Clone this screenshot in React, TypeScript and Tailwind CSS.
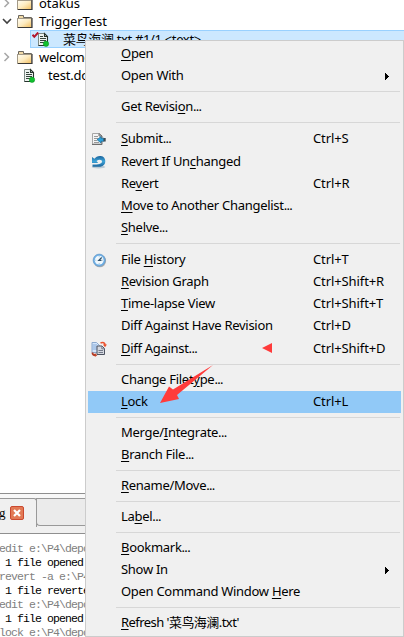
import React from "react";

type Entry = {
  label: string;
  // index of the underlined accelerator letter
  key?: number;
  shortcut?: string;
  icon?: React.ReactNode;
  submenu?: boolean;
  tall?: boolean;
  active?: boolean;
  tight?: boolean;
};

function FolderIcon() {
  return (
    <svg className="h-[15px] w-4 shrink-0" viewBox="0 0 16 15">
      <defs>
        <linearGradient id="folder" x1="0" y1="0" x2="1" y2="1">
          <stop offset="0" stopColor="#fffdf4" />
          <stop offset="0.5" stopColor="#fdebc0" />
          <stop offset="1" stopColor="#f2bd5c" />
        </linearGradient>
      </defs>
      <path d="M1.5 4V1.5H6.5V3.5H14.5V13.5H1.5Z" fill="#f0d9a6" stroke="#6b675f" />
      <rect x="0.5" y="4.5" width="14" height="9" fill="url(#folder)" stroke="#a39a88" />
      <path d="M1 13.5H15V4" fill="none" stroke="#3a3836" strokeWidth="1.2" />
    </svg>
  );
}

function FileIcon({ checked }: { checked?: boolean }) {
  return (
    <svg className="h-[15px] w-[18px] shrink-0" viewBox="0 0 18 15">
      <path d="M6.5 1.5H12.5L15.5 4.5V13.5H6.5Z" fill="#eef3f1" stroke="#7c8984" />
      <path d="M6.5 13.5H15.5V4.5L12.5 1.5V4.5H15.5" fill="none" stroke="#26332c" strokeWidth="1.1" />
      <path d="M8 4.5H11M8 6.5H14M8 8.5H14M8 10.5H12" stroke="#35443c" />
      <circle cx="14" cy="11.8" r="2.7" fill="#10c02e" stroke="#078a1d" strokeWidth="0.5" />
      {checked && <path d="M0.5 2.7L2.3 4.8L6.2 0.5" fill="none" stroke="#b3152b" strokeWidth="2" />}
    </svg>
  );
}

function Chevron({ open }: { open?: boolean }) {
  return (
    <svg className="h-[10px] w-[10px] shrink-0" viewBox="0 0 10 10" fill="none">
      {open ? (
        <path d="M1 3L5 7L9 3" stroke="#404040" strokeWidth="1.6" />
      ) : (
        <path d="M2.5 1L6.5 5L2.5 9" stroke="#a6a6a6" strokeWidth="1.5" />
      )}
    </svg>
  );
}

const submitIcon = (
  <svg className="h-4 w-4" viewBox="0 0 16 16">
    <path d="M1.5 2.5H8L10.5 5V13H1.5Z" fill="#f4f4f4" stroke="#a6a6a6" />
    <path d="M1 13.5H11V5L8 2.5V5H10.5" fill="none" stroke="#6e6e6e" />
    <path d="M3 5.5H7M3 7.5H7M3 9.5H6M3 11.5H8" stroke="#999" />
    <path d="M6 8.7L10 5.5V7.2H13V10.3H10V12Z" fill="#2ba1dc" stroke="#17638f" strokeWidth="0.6" />
    <rect x="12.5" y="7" width="2.2" height="3.5" fill="#3c4c56" />
  </svg>
);

const revertIcon = (
  <svg className="h-4 w-4" viewBox="0 0 16 16">
    <defs>
      <linearGradient id="undo" x1="0" y1="0" x2="0" y2="1">
        <stop offset="0" stopColor="#1a639c" />
        <stop offset="0.5" stopColor="#3da4d8" />
        <stop offset="1" stopColor="#1c659c" />
      </linearGradient>
    </defs>
    <ellipse cx="7.5" cy="13" rx="6.8" ry="1.4" fill="#b9cad5" />
    <path d="M1 3V9H7.2L5.5 7C8 5 11 5.5 11 7.7C10.8 9.8 7.5 10.5 1.5 10.5V12.7H9.5C16 12 15.8 2.5 9.8 2C7 1.7 4.8 2.9 3.4 4.7Z" fill="url(#undo)" />
  </svg>
);

const historyIcon = (
  <svg className="h-4 w-4" viewBox="0 0 16 16">
    <circle cx="8.8" cy="9" r="6.3" fill="#b0b0b0" />
    <circle cx="8.2" cy="8.2" r="6.1" fill="#6fb0e6" stroke="#5f94c4" strokeWidth="0.6" />
    <circle cx="8.2" cy="8.2" r="4.4" fill="#f0f8fd" />
    <path d="M8.2 4.3V5.2M4.3 8.2H5.2M11.2 8.2H12.1M8.2 11.2V12.1" stroke="#9dbdd3" />
    <path d="M10.7 5.5L7.8 8.4H10.5" fill="none" stroke="#31516a" strokeWidth="1.2" />
  </svg>
);

const diffIcon = (
  <svg className="h-4 w-4" viewBox="0 0 16 16">
    <path d="M1 1.5H5.5L8.5 4.5V11.5H1Z" fill="#d3e5fb" stroke="#8ba9ce" />
    <path d="M1.5 4H6M1.5 6H6M1.5 8H6" stroke="#86abd9" />
    <path d="M6 5H11L13.5 7.5V13.5H6Z" fill="#d5d8e0" stroke="#4d5361" />
    <path d="M10.8 5V7.8H13.5M7.5 9.5H12M7.5 11.5H12" fill="none" stroke="#737a89" />
    <path d="M9.5 2C12 0.8 14 2 14 4" fill="none" stroke="#ea5330" strokeWidth="1.7" />
    <path d="M11.8 3.5H16L14 6.3Z" fill="#ea5330" />
    <path d="M1.5 11.5C1.3 13.3 2.3 14.2 4.5 14.2" fill="none" stroke="#b23b25" strokeWidth="1.8" />
    <path d="M3.8 12V16L6.3 14.2Z" fill="#c54529" />
  </svg>
);

const groups: Entry[][] = [
  [{ label: "Open", key: 0 }, { label: "Open With", submenu: true }],
  [{ label: "Get Revision...", key: 10 }],
  [
    { label: "Submit...", key: 0, shortcut: "Ctrl+S", icon: submitIcon, tall: true },
    { label: "Revert If Unchanged", key: 12, icon: revertIcon, tall: true },
    { label: "Revert", key: 2, shortcut: "Ctrl+R" },
    { label: "Move to Another Changelist...", key: 0 },
    { label: "Shelve...", key: 0 },
  ],
  [
    { label: "File History", key: 5, shortcut: "Ctrl+T", icon: historyIcon, tall: true },
    { label: "Revision Graph", key: 0, shortcut: "Ctrl+Shift+R" },
    { label: "Time-lapse View", key: 0, shortcut: "Ctrl+Shift+T" },
    { label: "Diff Against Have Revision", shortcut: "Ctrl+D" },
    { label: "Diff Against...", key: 0, shortcut: "Ctrl+Shift+D", icon: diffIcon, tall: true },
  ],
  [{ label: "Change Filetype...", key: 12 }, { label: "Lock", key: 0, shortcut: "Ctrl+L", active: true }],
  [{ label: "Merge/Integrate...", key: 6 }, { label: "Branch File...", key: 0 }],
  [{ label: "Rename/Move...", key: 0 }],
  [{ label: "Label...", key: 2 }],
  [
    { label: "Bookmark...", key: 0 },
    { label: "Show In", submenu: true },
    { label: "Open Command Window Here", key: 20 },
  ],
  [{ label: "Refresh '菜鸟海澜.txt'", key: 0, tight: true }],
];

function Row({ item }: { item: Entry }) {
  const { label, key: k } = item;
  const dots = label.endsWith("...");
  const body = dots ? label.slice(0, -3) : label;
  return (
    <div className={`mx-[2px] flex items-center ${item.tall ? "h-[23px]" : "h-[22px]"} ${item.active ? "bg-[#91c9f7]" : ""}`}>
      <span className="flex w-[33px] shrink-0 pl-[3px]">{item.icon}</span>
      <span className={`w-48 shrink-0 pb-px whitespace-pre ${item.tight ? "tracking-[-0.55px]" : "tracking-[-0.29px]"}`}>
        {k === undefined ? body : (
          <>
            {body.slice(0, k)}
            <span className="underline decoration-1 underline-offset-2">{body[k]}</span>
            {body.slice(k + 1)}
          </>
        )}
        {dots && <span className="tracking-[-0.7px]">...</span>}
      </span>
      <span className="pb-px tracking-[-0.1px] whitespace-pre">{item.shortcut}</span>
      {item.submenu && (
        <svg className="mr-3 ml-auto h-[7px] w-1" viewBox="0 0 4 7" shapeRendering="crispEdges">
          <path d="M0 0L4 3.5L0 7Z" />
        </svg>
      )}
    </div>
  );
}

const log = [
  { text: "edit e:\\P4\\depot", cmd: true },
  { text: " 1 file opened", cmd: false },
  { text: "revert -a e:\\P4", cmd: true },
  { text: " 1 file reverted", cmd: false },
  { text: "edit e:\\P4\\depot", cmd: true },
  { text: " 1 file opened", cmd: false },
  { text: "lock e:\\P4\\depot", cmd: true },
];

export default function App() {
  return (
    <div className="relative h-[637px] w-[404px] overflow-hidden bg-white font-['Noto_Sans','Noto_Sans_CJK_SC',sans-serif] text-[13px] leading-none text-black">
      <div className="flex h-[494px] flex-col overflow-hidden border-b border-[#8f8f8f]">
        <div className="-mt-[6px] flex h-[18px] shrink-0 items-center pl-[2px]">
          <Chevron />
          <span className="ml-[5px]"><FolderIcon /></span>
          <span className="ml-[6px]">otakus</span>
        </div>
        <div className="flex h-[18px] shrink-0 items-center pl-[2px]">
          <Chevron open />
          <span className="ml-[5px]"><FolderIcon /></span>
          <span className="ml-[6px] tracking-[-0.5px]"><span className="tracking-[-0.45px]">T</span><span className="tracking-[-0.1px]">riggerTest</span></span>
        </div>
        <div className="ml-[30px] flex h-[18px] shrink-0 items-center border border-r-0 border-[#99d1ff] bg-[#cce8ff] pl-[1px]">
          <FileIcon checked />
          <span className="ml-[13px] tracking-[-0.35px] whitespace-pre">菜鸟海澜.txt #1/1 &lt;text&gt;</span>
        </div>
        <div className="flex h-[18px] shrink-0 items-center pl-[2px]">
          <Chevron />
          <span className="ml-[5px]"><FolderIcon /></span>
          <span className="ml-[6px] tracking-[-0.3px]">welcome</span>
        </div>
        <div className="flex h-[18px] shrink-0 items-center pl-[18px]">
          <FileIcon />
          <span className="ml-3 tracking-[-0.2px]">test.docx</span>
        </div>
      </div>
      <div className="h-1 bg-[#f8f8f8]" />
      <div className="flex h-[36px] border-b border-[#8f8f8f] bg-[#f0f0f0]">
        <div className="flex h-[29px] w-[37px] shrink-0 items-center rounded-tr-[3px] border-t border-r border-[#999] pb-[1px] font-['Liberation_Serif',serif]">
          <span className="-ml-px w-[11px] pb-px text-[13px]">g</span>
          <span className="flex h-[14px] w-[14px] items-center justify-center rounded-[2px] border border-[#ca4930] bg-[#e27955]">
            <svg className="h-2 w-2" viewBox="0 0 8 8"><path d="M1 1L7 7M7 1L1 7" stroke="white" strokeWidth="2.2" /></svg>
          </span>
        </div>
        <div className="-ml-px h-[28px] flex-1 rounded-bl-[4px] border border-r-0 border-[#999] bg-[#ebebeb]" />
      </div>
      <div className="flex h-[103px] flex-col overflow-hidden pt-[8px] font-['Liberation_Mono',monospace] text-[11.5px] tracking-[-0.9px]">
        {log.map((l, i) => (
          <div key={i} className={`-ml-px h-[14px] shrink-0 whitespace-pre leading-[14px] ${l.cmd ? "text-[#808080]" : "text-black"}`}>{l.text}</div>
        ))}
      </div>

      <div className="absolute top-10 left-[85px] h-[597px] w-[319px] border border-[#cccccc] bg-[#f0f0f0] pt-[2px]">
        {groups.map((g, i) => (
          <div key={i}>
            {i > 0 && <div className="mr-[3px] ml-[30px] flex h-[9px] items-center"><div className="h-px w-full bg-[#d7d7d7]" /></div>}
            {g.map((item) => <Row key={item.label} item={item} />)}
          </div>
        ))}
      </div>
      <svg className="pointer-events-none absolute top-[340px] left-[155px] h-[70px] w-[120px]" viewBox="155 340 120 70">
        <path d="M160 403L169 386.5L173 389.5L213 365L177 395L179 399Z" fill="#ff3b3b" />
        <path d="M262 348L272 343V353Z" fill="#ff3b3b" />
      </svg>
    </div>
  );
}
